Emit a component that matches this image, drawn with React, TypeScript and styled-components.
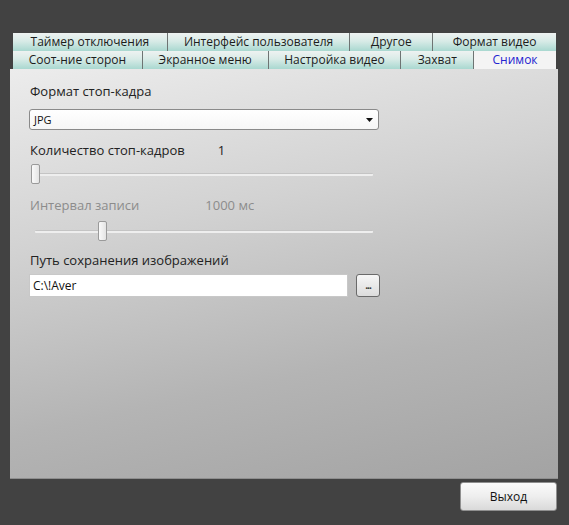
import styled, { createGlobalStyle } from "styled-components";

const Global = createGlobalStyle`
  html, body { margin: 0; padding: 0; background: #424242; }
  body { font-family: "Open Sans", "Noto Sans", sans-serif; }
`;

const Window = styled.div`
  width: 569px;
  height: 525px;
  background: #424242;
  box-sizing: border-box;
  padding: 33px 11px 0 10px;
  display: flex;
  flex-direction: column;
`;

const TabRow = styled.div`
  display: flex;
  height: 18px;
  margin: 0 2px 0 3px;
`;

const Tab = styled.div<{ w: number; active?: boolean }>`
  width: ${p => p.w}px;
  box-sizing: border-box;
  border-right: 1px solid #6e7473;
  &:last-child { border-right: none; }
  background: ${p => p.active ? "#f4f4f4" : "linear-gradient(#eef2f1 0%, #d8ebe7 45%, #a9d8d0 100%)"};
  color: ${p => p.active ? "#2424d0" : "#1c1c1c"};
  font-size: 12px;
  line-height: 18px;
  text-align: center;
  white-space: nowrap;
  overflow: hidden;
`;

const Panel = styled.div`
  height: 410px;
  background: linear-gradient(168deg, #ececec 0%, #d2d2d2 35%, #b4b4b4 70%, #a3a3a3 100%);
  border-bottom: 1px solid #8e8e8e;
  box-sizing: border-box;
  padding: 13px 0 0 19px;
  display: flex;
  flex-direction: column;
`;

const Label = styled.div<{ disabled?: boolean }>`
  font-size: 13px;
  color: ${p => p.disabled ? "#8c8c8c" : "#222"};
  height: 18px;
  line-height: 18px;
  padding-left: 1px;
  display: flex;
`;

const Value = styled.span`
  position: relative;
`;

const Select = styled.div`
  margin-top: 9px;
  width: 350px;
  height: 21px;
  box-sizing: border-box;
  background: linear-gradient(#ffffff, #f6f6f6);
  border: 1px solid #8a8a8a;
  border-radius: 3px;
  display: flex;
  align-items: center;
  justify-content: space-between;
  padding: 0 5px 0 4px;
  font-size: 11px;
  color: #111;
`;

const Slider = styled.div`
  width: 338px;
  height: 20px;
  margin-left: 6px;
  display: flex;
  align-items: center;
`;

const Track = styled.div`
  flex: 1;
  height: 2px;
  background: #eeeeee;
  border-top: 1px solid #c4c4c4;
  border-radius: 1px;
  position: relative;
`;

const Thumb = styled.div`
  position: absolute;
  top: -10px;
  width: 9px;
  height: 20px;
  box-sizing: border-box;
  background: linear-gradient(90deg, #fafafa, #e4e4e4);
  border: 1px solid #9a9a9a;
  border-radius: 2px;
`;

const PathRow = styled.div`
  display: flex;
  gap: 8px;
  margin-top: 5px;
`;

const Input = styled.div`
  width: 319px;
  height: 23px;
  box-sizing: border-box;
  background: #fff;
  border: 1px solid #c8c8c8;
  font-size: 12px;
  line-height: 21px;
  padding-left: 3px;
  color: #111;
`;

const SmallButton = styled.div`
  width: 24px;
  height: 23px;
  box-sizing: border-box;
  background: linear-gradient(#f6f6f6, #dcdcdc);
  border: 1px solid #6a6a6a;
  border-radius: 3px;
  font-size: 10px;
  line-height: 20px;
  text-align: center;
  color: #333;
  font-weight: bold;
  letter-spacing: -1px;
`;

const Footer = styled.div`
  display: flex;
  justify-content: flex-end;
  padding-top: 3px;
  padding-right: 1px;
`;

const ExitButton = styled.div`
  width: 97px;
  height: 29px;
  box-sizing: border-box;
  background: linear-gradient(#fbfbfb 0%, #eeeeee 50%, #d9d9d9 100%);
  border: 1px solid #8f8f8f;
  border-radius: 3px;
  font-size: 12px;
  line-height: 27px;
  text-align: center;
  color: #111;
`;

const row1 = [
  { t: "Таймер отключения", w: 155 },
  { t: "Интерфейс пользователя", w: 183 },
  { t: "Другое", w: 83 },
  { t: "Формат видео", w: 123 },
];
const row2 = [
  { t: "Соот-ние сторон", w: 130 },
  { t: "Экранное меню", w: 126 },
  { t: "Настройка видео", w: 133 },
  { t: "Захват", w: 73 },
  { t: "Снимок", w: 82, active: true },
];

export default function App() {
  return (
    <>
      <Global />
      <Window>
        <TabRow>
          {row1.map(r => <Tab key={r.t} w={r.w}>{r.t}</Tab>)}
        </TabRow>
        <TabRow>
          {row2.map(r => <Tab key={r.t} w={r.w} active={r.active}>{r.t}</Tab>)}
        </TabRow>
        <Panel>
          <Label>Формат стоп-кадра</Label>
          <Select>
            <span>JPG</span>
            <svg width="7" height="4" viewBox="0 0 7 4"><path d="M0 0h7L3.5 4z" fill="#111" /></svg>
          </Select>
          <Label style={{ marginTop: 11 }}>
            Количество стоп-кадров<Value style={{ left: 33 }}>1</Value>
          </Label>
          <Slider style={{ marginTop: 5 }}>
            <Track><Thumb style={{ left: -4 }} /></Track>
          </Slider>
          <Label disabled style={{ marginTop: 12 }}>
            Интервал записи<Value style={{ left: 66 }}>1000 мс</Value>
          </Label>
          <Slider style={{ marginTop: 7 }}>
            <Track><Thumb style={{ left: 63 }} /></Track>
          </Slider>
          <Label style={{ marginTop: 10 }}>Путь сохранения изображений</Label>
          <PathRow>
            <Input>C:\!Aver</Input>
            <SmallButton>...</SmallButton>
          </PathRow>
        </Panel>
        <Footer>
          <ExitButton>Выход</ExitButton>
        </Footer>
      </Window>
    </>
  );
}
